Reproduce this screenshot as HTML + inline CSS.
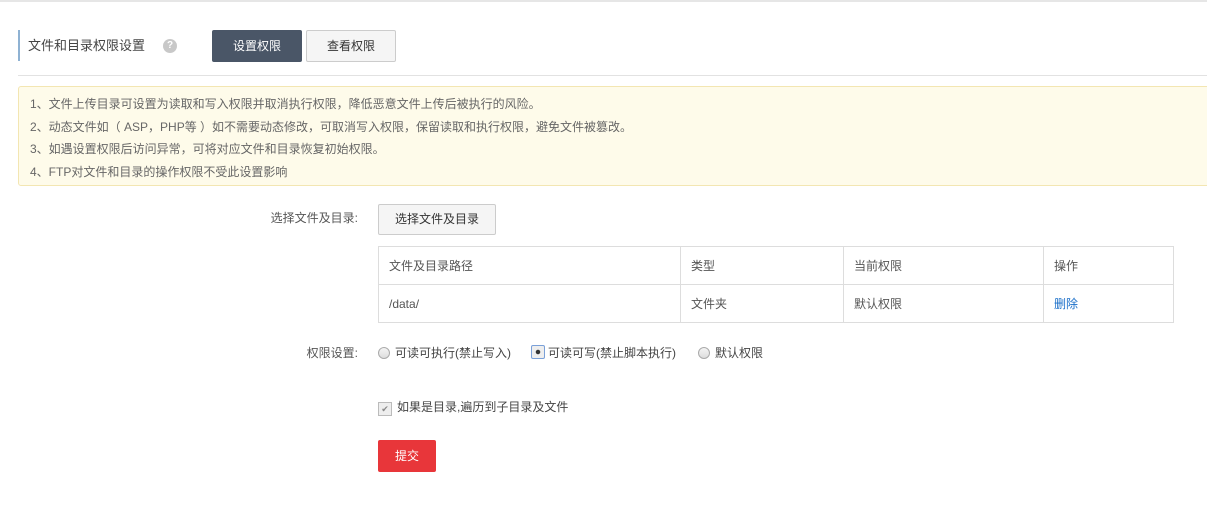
<!DOCTYPE html>
<html><head><meta charset="utf-8"><style>
body{margin:0;width:1207px;height:514px;background:#fff;font-family:"Liberation Sans","Noto Sans CJK SC",sans-serif;color:#333;position:relative;overflow:hidden;font-size:12px}
.a{position:absolute}
.btn{position:absolute;box-sizing:border-box;text-align:center;font-size:12px}
table{border-collapse:collapse;position:absolute;left:378px;top:246px;width:796px}
td{border:1px solid #ddd;height:37px;padding:0 10px;font-size:12px;color:#555}
.radio{display:inline-block;width:12px;height:12px;border:1px solid #aaa;border-radius:50%;background:linear-gradient(#f4f4f4,#ddd);vertical-align:-2px;margin-right:5px;box-sizing:border-box}
</style></head><body>
<div class="a" style="left:0;top:0;width:1207px;height:2px;background:#e6e6e6"></div>
<div class="a" style="left:18px;top:30px;width:2px;height:31px;background:#8fb2d3"></div>
<div class="a" style="left:28px;top:35px;font-size:13px;color:#444">文件和目录权限设置</div>
<div class="a" style="left:163px;top:39px;width:14px;height:14px;border-radius:50%;background:#c8c8c8;color:#fff;font-size:10px;text-align:center;line-height:14px;font-weight:bold">?</div>
<div class="btn" style="left:212px;top:30px;width:90px;height:32px;background:#4a5667;border-radius:2px;color:#fff;line-height:32px">设置权限</div>
<div class="btn" style="left:306px;top:30px;width:90px;height:32px;background:#f5f5f5;border:1px solid #ccc;border-radius:2px;line-height:30px;color:#333">查看权限</div>
<div class="a" style="left:18px;top:75px;width:1189px;height:1px;background:#e2e2e2"></div>
<div class="a" style="left:18px;top:86px;width:1195px;height:100px;box-sizing:border-box;background:#fefbea;border:1px solid #f3e6b2;border-radius:3px"></div>
<div class="a" style="left:30px;top:93px;line-height:22.7px;font-size:12px;color:#666">1、文件上传目录可设置为读取和写入权限并取消执行权限，降低恶意文件上传后被执行的风险。<br>2、动态文件如（ ASP，PHP等 ）如不需要动态修改，可取消写入权限，保留读取和执行权限，避免文件被篡改。<br>3、如遇设置权限后访问异常，可将对应文件和目录恢复初始权限。<br>4、FTP对文件和目录的操作权限不受此设置影响</div>
<div class="a" style="left:258px;top:209px;width:100px;text-align:right;color:#555">选择文件及目录:</div>
<div class="btn" style="left:378px;top:204px;width:118px;height:31px;background:#f5f5f5;border:1px solid #ccc;border-radius:2px;line-height:29px">选择文件及目录</div>
<table><tr><td style="width:281px">文件及目录路径</td><td style="width:142px">类型</td><td style="width:179px">当前权限</td><td>操作</td></tr>
<tr><td>/data/</td><td>文件夹</td><td>默认权限</td><td style="color:#1a6fc9">删除</td></tr></table>
<div class="a" style="left:258px;top:344px;width:100px;text-align:right;color:#555">权限设置:</div>
<div class="a" style="left:378px;top:344px;color:#444"><span class="radio"></span>可读可执行(禁止写入)</div>
<div class="a" style="left:531px;top:344px;color:#444"><span class="radio" style="background:radial-gradient(circle,#333 2px,#eee 2.5px);border-color:#7aa0d8;border-radius:2px;width:14px;height:14px;margin-right:3px"></span>可读可写(禁止脚本执行)</div>
<div class="a" style="left:698px;top:344px;color:#444"><span class="radio"></span>默认权限</div>
<div class="a" style="left:378px;top:398px;color:#444"><span style="display:inline-block;width:12px;height:12px;border:1px solid #bbb;background:#eee;vertical-align:-1px;margin-right:5px;font-size:9px;line-height:12px;text-align:center;color:#888">✔</span>如果是目录,遍历到子目录及文件</div>
<div class="btn" style="left:378px;top:440px;width:58px;height:32px;background:#e8363a;border-radius:2px;color:#fff;line-height:32px">提交</div>
</body></html>
